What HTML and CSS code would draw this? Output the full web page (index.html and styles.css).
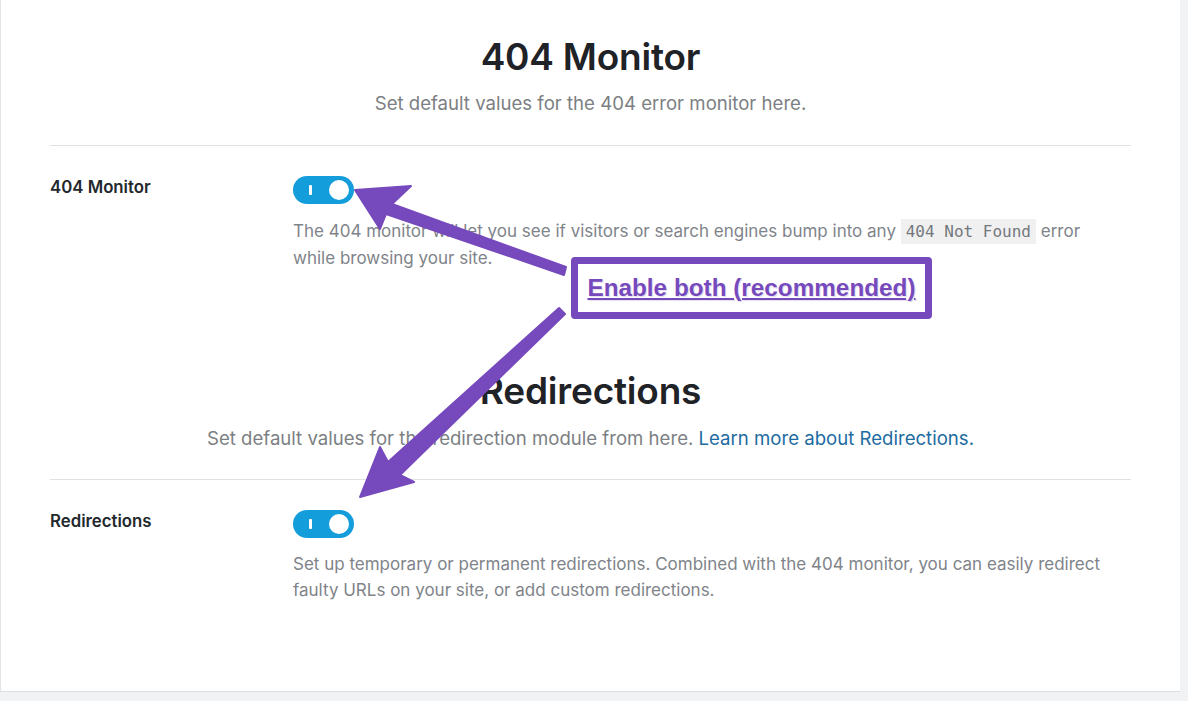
FILE: index.html
```html
<!DOCTYPE html>
<html lang="en">
<head>
<meta charset="utf-8">
<title>404 Monitor &amp; Redirections</title>
<link rel="stylesheet" href="styles.css">
</head>
<body>
<div class="page">
  <main class="panel">
    <section class="section section-first">
      <h2 class="section-title">404 Monitor</h2>
      <p class="section-sub">Set default values for the 404 error monitor here.</p>
      <hr class="divider">
      <div class="row">
        <div class="row-label">404 Monitor</div>
        <div class="row-field">
          <span class="toggle"><span class="toggle-bar"></span><span class="toggle-knob"></span></span>
          <p class="row-desc">The 404 monitor will let you see if visitors or search engines bump into any <code class="code">404 Not Found</code> error while browsing your site.</p>
        </div>
      </div>
    </section>
    <section class="section section-second">
      <h2 class="section-title">Redirections</h2>
      <p class="section-sub">Set default values for the redirection module from here. <a class="link" href="#">Learn more about Redirections.</a></p>
      <hr class="divider">
      <div class="row">
        <div class="row-label">Redirections</div>
        <div class="row-field">
          <span class="toggle"><span class="toggle-bar"></span><span class="toggle-knob"></span></span>
          <p class="row-desc">Set up temporary or permanent redirections. Combined with the 404 monitor, you can easily redirect faulty URLs on your site, or add custom redirections.</p>
        </div>
      </div>
    </section>
  </main>

  <svg class="arrows" width="1188" height="701" viewBox="0 0 1188 701" aria-hidden="true">
    <polygon class="arrow" points="355,190 411,186 392,204 566,267 564,275 386,214 380,229"/>
    <polygon class="arrow" points="360,497 380,447 388,462 559,308 565,314 400,475 414,482"/>
  </svg>
  <div class="callout"><span class="callout-text">Enable both (recommended)</span></div>
</div>
</body>
</html>
```

FILE: styles.css
```css
html, body {
  margin: 0;
  padding: 0;
}

body {
  background: #f0f2f4;
  font-family: Inter, "Noto Sans", "Liberation Sans", sans-serif;
  color: #23282d;
}

.page {
  position: relative;
  width: 1188px;
  height: 701px;
  overflow: hidden;
}

.panel {
  width: 1180px;
  height: 692px;
  background: #fff;
  border-left: 1px solid #e2e4e7;
  border-bottom: 1px solid #dcdee1;
  box-sizing: border-box;
  padding: 35px 49px 0 49px;
}

.section-title {
  margin: 0;
  text-align: center;
  font-size: 37px;
  line-height: 44px;
  font-weight: 600;
  color: #1f2226;
  letter-spacing: -0.2px;
}

.section-sub {
  margin: 11px 0 0;
  text-align: center;
  font-size: 18.6px;
  line-height: 26px;
  color: #7c7f83;
}

.link {
  color: #1e6ba1;
  text-decoration: none;
}

.divider {
  margin: 29px 0 0;
  border: 0;
  border-top: 1px solid #dfe1e4;
  height: 0;
}

.row {
  display: flex;
  padding-top: 30px;
}

.row-label {
  width: 243px;
  flex: none;
  font-size: 16.8px;
  line-height: 22px;
  font-weight: 600;
  color: #23282d;
}

.row-field {
  flex: 1;
  display: flex;
  flex-direction: column;
  align-items: flex-start;
}

.toggle {
  position: relative;
  display: block;
  width: 61px;
  height: 28px;
  border-radius: 14px;
  background: #149ddb;
}

.toggle-bar {
  position: absolute;
  left: 16px;
  top: 9px;
  width: 3px;
  height: 10px;
  border-radius: 1px;
  background: #fff;
}

.toggle-knob {
  position: absolute;
  right: 5px;
  top: 4px;
  width: 20px;
  height: 20px;
  border-radius: 50%;
  background: #fff;
}

.row-desc {
  margin: 14px 0 0;
  font-size: 17px;
  line-height: 26px;
  color: #80848a;
  max-width: 820px;
}

.code {
  font-family: "DejaVu Sans Mono", "Liberation Mono", monospace;
  font-size: 16px;
  background: #f0f0f1;
  color: #74787d;
  padding: 3px 5px;
}

.section-second {
  padding-top: 98px;
}

.section-second .section-sub {
  margin-top: 12px;
}

.section-second .divider {
  margin-top: 28px;
}

.section-second .row {
  padding-top: 30px;
}

.section-second .row-desc {
  margin-top: 13px;
}

/* annotation overlay */
.arrows {
  position: absolute;
  left: 0;
  top: 0;
  pointer-events: none;
}

.arrow {
  fill: #7649bd;
  stroke: #7649bd;
  stroke-width: 2;
  stroke-linejoin: round;
}

.callout {
  position: absolute;
  left: 571px;
  top: 257px;
  width: 361px;
  height: 62px;
  box-sizing: border-box;
  border: 7px solid #7649bd;
  border-radius: 4px;
  background: #fff;
  display: flex;
  align-items: center;
  justify-content: center;
}

.callout-text {
  font-family: "Liberation Sans", Arial, sans-serif;
  font-weight: 700;
  font-size: 24.3px;
  line-height: 28px;
  color: #7649bd;
  text-decoration: underline;
  text-decoration-thickness: 2px;
  text-underline-offset: 2px;
  text-shadow: 0 0 2px #fff, 1px 1px 1px #d8d0e6;
  white-space: nowrap;
}
```
